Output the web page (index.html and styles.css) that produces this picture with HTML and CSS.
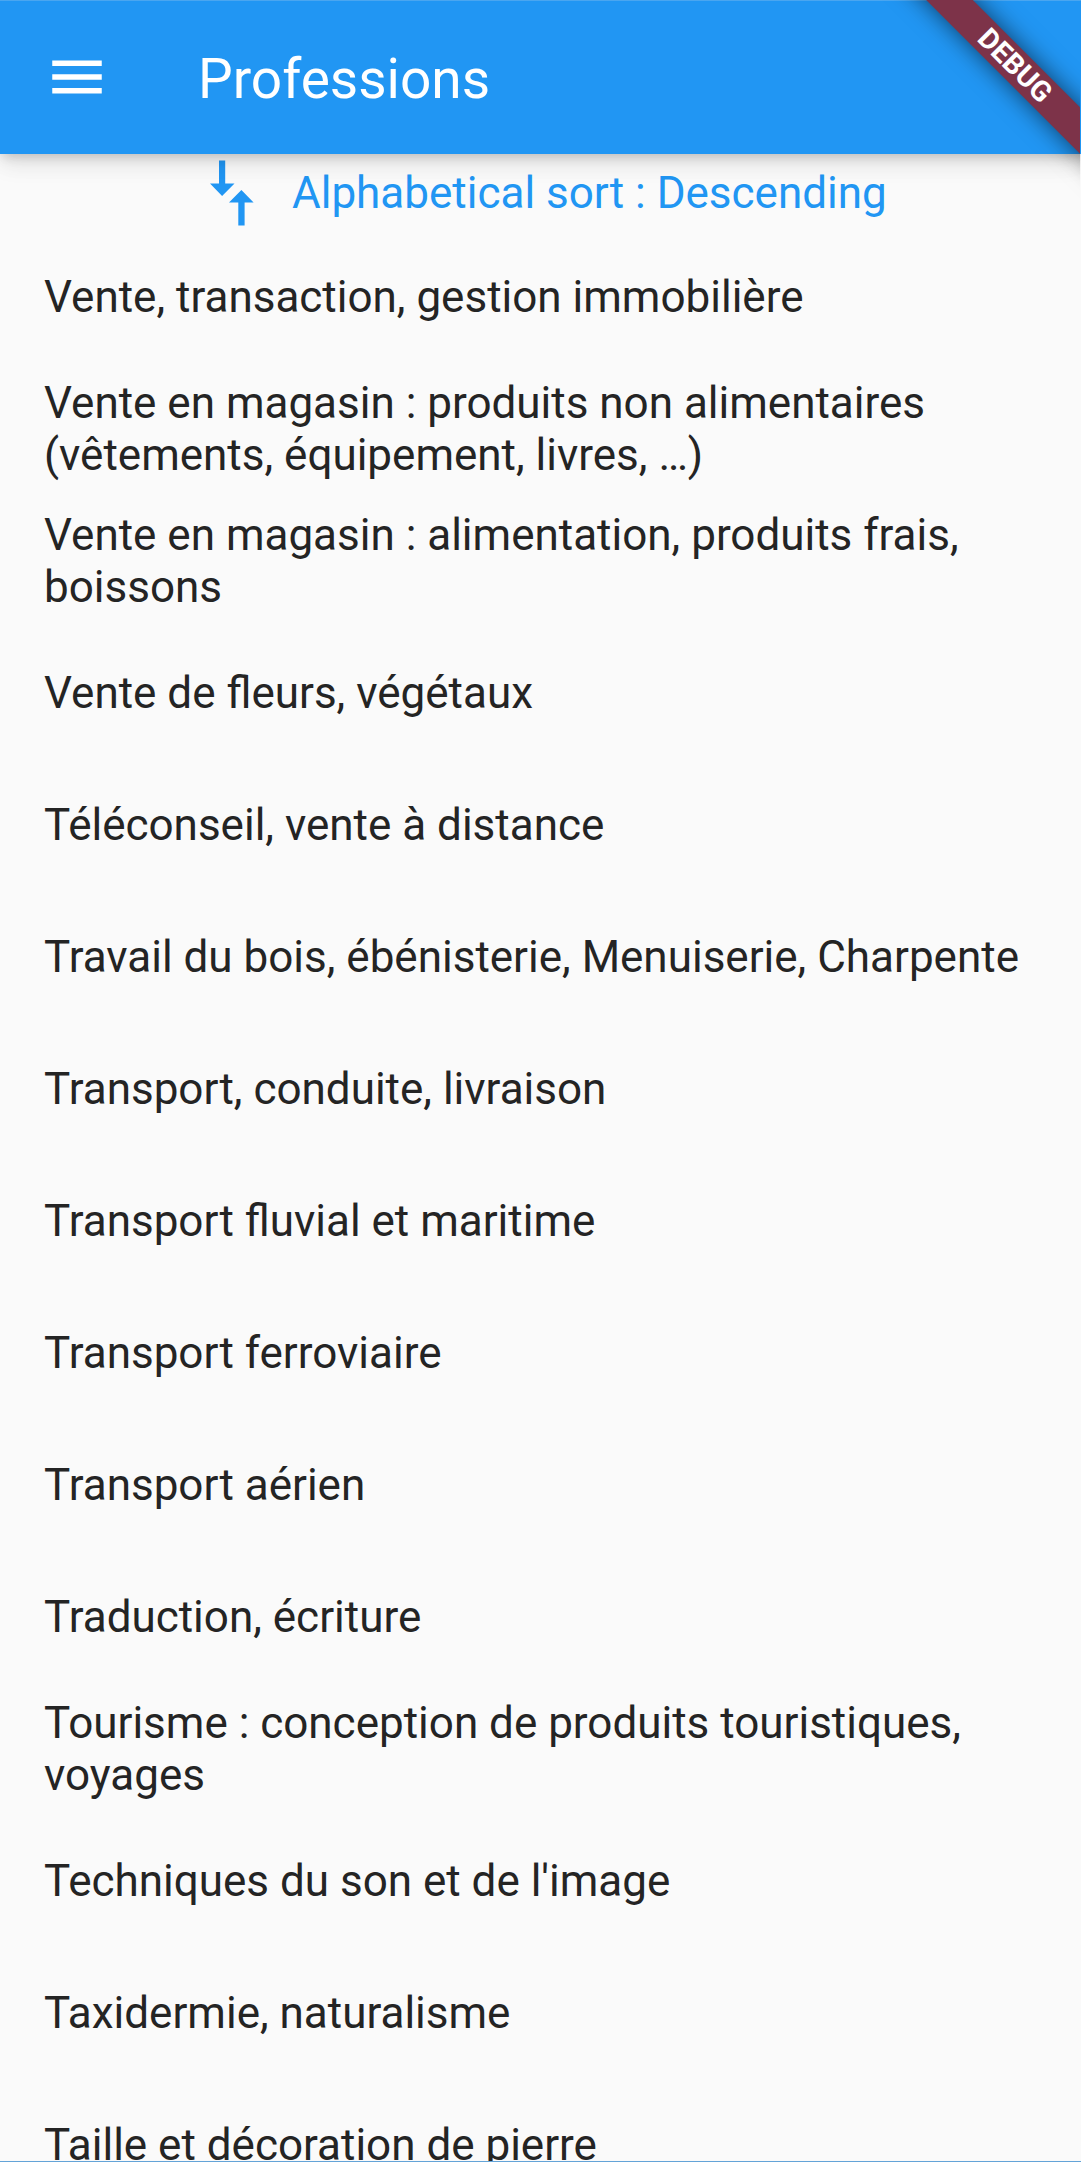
FILE: index.html
```html
<!DOCTYPE html>
<html lang="fr">
<head>
<meta charset="utf-8">
<title>Professions</title>
<link rel="stylesheet" href="styles.css">
</head>
<body>
<div class="screen">
  <header class="app-bar">
    <svg class="menu-icon" viewBox="0 0 24 24" aria-hidden="true"><path d="M3 18h18v-2H3v2zm0-5h18v-2H3v2zm0-7v2h18V6H3z"/></svg>
    <h1 class="title">Professions</h1>
    <div class="ribbon-area"><div class="ribbon">DEBUG</div></div>
  </header>
  <div class="sort">
    <svg class="sort-icon" viewBox="0 0 44 66" aria-hidden="true"><path d="M9 .5h6.200v23h9.300L12.100 36 0 23.500h9zM28.300 65.500v-23H19L31.400 30 43.600 42.500h-9v23z"/></svg>
    <span class="sort-label">Alphabetical sort : Descending</span>
  </div>
  <ul class="list">
    <li class="item">Vente, transaction, gestion immobilière</li>
    <li class="item">Vente en magasin : produits non alimentaires (vêtements, équipement, livres, …)</li>
    <li class="item">Vente en magasin : alimentation, produits frais, boissons</li>
    <li class="item">Vente de fleurs, végétaux</li>
    <li class="item">Téléconseil, vente à distance</li>
    <li class="item">Travail du bois, ébénisterie, Menuiserie, Charpente</li>
    <li class="item">Transport, conduite, livraison</li>
    <li class="item">Transport fluvial et maritime</li>
    <li class="item">Transport ferroviaire</li>
    <li class="item">Transport aérien</li>
    <li class="item">Traduction, écriture</li>
    <li class="item">Tourisme : conception de produits touristiques, voyages</li>
    <li class="item">Techniques du son et de l'image</li>
    <li class="item">Taxidermie, naturalisme</li>
    <li class="item">Taille et décoration de pierre</li>
  </ul>
</div>
</body>
</html>
```
FILE: styles.css
```css
* { box-sizing: border-box; }
body { margin: 0; background: #fafafa; font-family: Roboto, "Liberation Sans", sans-serif; }
.screen { height: 2162px; overflow: hidden; display: flex; flex-direction: column; border-bottom: 1px solid #64a4d8; }
.app-bar {
  position: relative;
  z-index: 1;
  flex: none;
  height: 154px;
  padding-left: 44px;
  display: flex;
  align-items: center;
  gap: 88px;
  background: #2196f3;
  box-shadow: inset 0 1px #4aa6f0, 0 5px 11px -3px rgba(0,0,0,.18), 0 11px 22px rgba(0,0,0,.07), 0 3px 28px rgba(0,0,0,.06);
}
.menu-icon { width: 66px; height: 66px; fill: #fff; }
.title { margin: 0; padding-top: 3px; color: #fff; font-size: 55px; font-weight: 400; line-height: 64px; }
.ribbon-area { position: absolute; top: 0; right: 1px; width: 220px; height: 220px; overflow: hidden; }
.ribbon {
  position: absolute;
  left: -45px;
  top: 48.5px;
  width: 400px;
  height: 33px;
  transform: rotate(45deg);
  background: #7d3349;
  box-shadow: 0 0 24px rgba(0,0,0,.6);
  color: #fff;
  font-size: 28.5px;
  font-weight: 700;
  line-height: 33px;
  text-align: center;
}
.sort { flex: none; height: 77px; padding-left: 210px; display: flex; align-items: center; gap: 38px; color: #2196f3; }
.sort-icon { width: 44px; height: 66px; fill: currentColor; overflow: visible; }
.sort-label { font-size: 44px; line-height: 52px; }
.list { margin: 0; padding: 0; list-style: none; }
.item { height: 132px; padding: 0 44px; display: flex; align-items: center; font-size: 44px; line-height: 52px; color: #242424; }
```
